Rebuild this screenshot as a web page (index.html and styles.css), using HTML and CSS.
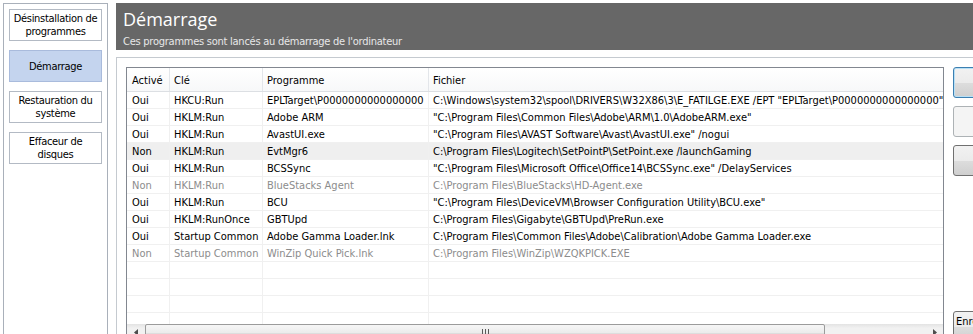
FILE: index.html
```html
<!DOCTYPE html>
<html lang="fr">
<head>
    <meta charset="UTF-8">
    <title>Démarrage</title>
    <link rel="stylesheet" href="styles.css">
</head>
<body>
    <div class="window">
        <nav class="sidebar">
            <div class="nav-item">Désinstallation de<br>programmes</div>
            <div class="nav-item active">Démarrage</div>
            <div class="nav-item">Restauration du<br>système</div>
            <div class="nav-item">Effaceur de<br>disques</div>
        </nav>

        <main class="content">
            <header class="banner">
                <h1>Démarrage</h1>
                <p>Ces programmes sont lancés au démarrage de l'ordinateur</p>
            </header>

            <section class="panel">
                <div class="list">
                    <div class="row head">
                        <div>Activé</div><div>Clé</div><div>Programme</div><div>Fichier</div>
                    </div>
                    <div class="rows">
                        <div class="row"><div>Oui</div><div>HKCU:Run</div><div>EPLTarget\P0000000000000000</div><div>C:\Windows\system32\spool\DRIVERS\W32X86\3\E_FATILGE.EXE /EPT "EPLTarget\P0000000000000000"</div></div>
                        <div class="row"><div>Oui</div><div>HKLM:Run</div><div>Adobe ARM</div><div>"C:\Program Files\Common Files\Adobe\ARM\1.0\AdobeARM.exe"</div></div>
                        <div class="row"><div>Oui</div><div>HKLM:Run</div><div>AvastUI.exe</div><div>"C:\Program Files\AVAST Software\Avast\AvastUI.exe" /nogui</div></div>
                        <div class="row hover"><div>Non</div><div>HKLM:Run</div><div>EvtMgr6</div><div>C:\Program Files\Logitech\SetPointP\SetPoint.exe /launchGaming</div></div>
                        <div class="row"><div>Oui</div><div>HKLM:Run</div><div>BCSSync</div><div>"C:\Program Files\Microsoft Office\Office14\BCSSync.exe" /DelayServices</div></div>
                        <div class="row off"><div>Non</div><div>HKLM:Run</div><div>BlueStacks Agent</div><div>C:\Program Files\BlueStacks\HD-Agent.exe</div></div>
                        <div class="row"><div>Oui</div><div>HKLM:Run</div><div>BCU</div><div>"C:\Program Files\DeviceVM\Browser Configuration Utility\BCU.exe"</div></div>
                        <div class="row"><div>Oui</div><div>HKLM:RunOnce</div><div>GBTUpd</div><div>C:\Program Files\Gigabyte\GBTUpd\PreRun.exe</div></div>
                        <div class="row"><div>Oui</div><div>Startup Common</div><div>Adobe Gamma Loader.lnk</div><div>C:\Program Files\Common Files\Adobe\Calibration\Adobe Gamma Loader.exe</div></div>
                        <div class="row off"><div>Non</div><div>Startup Common</div><div>WinZip Quick Pick.lnk</div><div>C:\Program Files\WinZip\WZQKPICK.EXE</div></div>
                        <div class="row"><div></div><div></div><div></div><div></div></div>
                        <div class="row"><div></div><div></div><div></div><div></div></div>
                        <div class="row"><div></div><div></div><div></div><div></div></div>
                        <div class="row"><div></div><div></div><div></div><div></div></div>
                    </div>
                    <div class="hscroll">
                        <div class="sb-btn">
                            <svg width="5" height="7" viewBox="0 0 5 7"><path d="M4 0 L0 3.5 L4 7 Z" fill="#4d4d4d"/></svg>
                        </div>
                        <div class="thumb"><span class="grip"></span></div>
                        <div class="track"></div>
                        <div class="sb-btn">
                            <svg width="5" height="7" viewBox="0 0 5 7"><path d="M1 0 L5 3.5 L1 7 Z" fill="#4d4d4d"/></svg>
                        </div>
                    </div>
                </div>

                <div class="actions">
                    <button class="btn default" aria-label="Activer"></button>
                    <button class="btn" aria-label="Désactiver" disabled></button>
                    <button class="btn" aria-label="Supprimer"></button>
                    <button class="btn save">Enregistrer</button>
                </div>
            </section>
        </main>
    </div>
</body>
</html>
```

FILE: styles.css
```css
* {
    box-sizing: border-box;
}

body {
    margin: 0;
    background: #fff;
    font-family: "DejaVu Sans Condensed", "DejaVu Sans", sans-serif;
    font-stretch: condensed;
    font-size: 11px;
    color: #000;
    height: 334px;
    overflow: hidden;
}

.window {
    display: flex;
    gap: 8px;
    padding: 3px 0 0 3px;
    width: 1100px;
}

/* left menu */
.sidebar {
    flex-shrink: 0;
    width: 105px;
    height: 340px;
    border: 1px solid #a9b0ba;
    padding: 5px 5px 0;
    display: flex;
    flex-direction: column;
    gap: 9px;
}

.nav-item {
    height: 32px;
    border: 1px solid #b3bac4;
    display: flex;
    align-items: center;
    justify-content: center;
    text-align: center;
    line-height: 13px;
    letter-spacing: -0.3px;
}

.nav-item.active {
    background: #c4d4ee;
    border-color: #a9bbdc;
}

.content {
    flex-shrink: 0;
    width: 960px;
}

.banner {
    height: 47px;
    background: #676767;
    color: #fff;
    padding: 4px 7px 0;
}

.banner h1 {
    margin: 0;
    font: 400 18px/24px "Open Sans", sans-serif;
}

.banner p {
    margin: 3px 0 0;
    line-height: 15px;
    letter-spacing: -0.25px;
    color: #e8e8e8;
}

.panel {
    margin-top: 7px;
    height: 300px;
    border: 1px solid #c5cad0;
    border-right: none;
    padding: 9px 0 0 9px;
    display: flex;
    gap: 9px;
}

/* list view */
.list {
    flex-shrink: 0;
    width: 818px;
    height: 275px;
    border: 1px solid #828790;
    display: flex;
    flex-direction: column;
}

.rows {
    flex: 1;
    overflow: hidden;
}

.row {
    display: grid;
    grid-template-columns: 43px 93px 166px 1fr;
    height: 17px;
    line-height: 16px;
    border-bottom: 1px solid #f0f0f0;
}

.row > div {
    padding: 1px 0 0 4px;
    border-right: 1px solid #f0f0f0;
    white-space: nowrap;
    overflow: hidden;
}

.row > div:first-child {
    padding-left: 5px;
}

.row > div:last-child {
    border-right: none;
}

.row.head {
    height: 24px;
    line-height: 21px;
    background: linear-gradient(#fff, #f7f8f9);
    border-bottom: 1px solid #dcdfe3;
}

.row.head > div {
    padding-top: 2px;
    border-right-color: #e3e6ea;
}

.row.hover {
    background: #efefef;
}

.row.off {
    color: #8c8c8c;
}

/* horizontal scrollbar */
.hscroll {
    height: 17px;
    display: flex;
    background: linear-gradient(#e3e3e3, #f1f1f1 25%, #f1f1f1 75%, #e9e9e9);
}

.sb-btn {
    width: 18px;
    display: flex;
    align-items: center;
    justify-content: center;
}

.thumb {
    width: 680px;
    border: 1px solid #9b9b9b;
    border-radius: 2px;
    background: linear-gradient(#f6f6f6, #ececec 50%, #dedede 51%, #d6d6d6);
    display: flex;
    align-items: center;
    justify-content: center;
}

.grip {
    width: 7px;
    height: 7px;
    background: repeating-linear-gradient(90deg, #5a5a5a 0 1px, transparent 1px 3px);
}

.track {
    flex: 1;
}

/* buttons on the right */
.actions {
    width: 110px;
    height: 275px;
    display: flex;
    flex-direction: column;
    gap: 8px;
}

.btn {
    height: 31px;
    border: 1px solid #707070;
    border-radius: 3px;
    background: linear-gradient(#f2f2f2, #ebebeb 50%, #dddddd 51%, #cfcfcf);
    font: inherit;
    color: #000;
    text-align: left;
    padding: 0;
}

.btn.default {
    border-color: #3c7fb1;
    box-shadow: inset 0 0 0 1px #b8e0f6;
}

.btn:disabled {
    border-color: #adb2b5;
    background: #f4f4f4;
}

.btn.save {
    margin-top: auto;
    padding: 0 0 10px 2px;
}
```
